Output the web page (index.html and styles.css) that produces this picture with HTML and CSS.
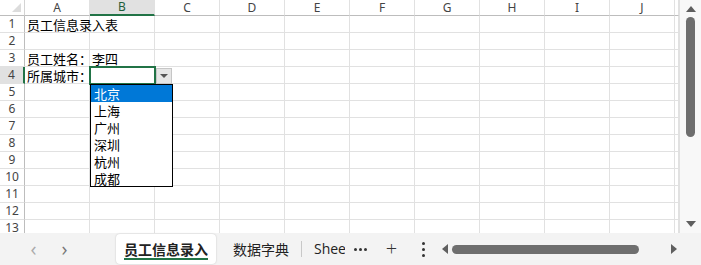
FILE: index.html
```html
<!DOCTYPE html>
<html>

<head>
    <meta charset="UTF-8">
    <title>员工信息录入</title>
    <link rel="stylesheet" href="styles.css">
</head>

<body>
    <div class="workbook">
        <div class="main">
            <div class="sheet">
                <div class="corner"><span class="tri"></span></div>
                <div class="col-head">A</div>
                <div class="col-head active">B</div>
                <div class="col-head">C</div>
                <div class="col-head">D</div>
                <div class="col-head">E</div>
                <div class="col-head">F</div>
                <div class="col-head">G</div>
                <div class="col-head">H</div>
                <div class="col-head">I</div>
                <div class="col-head">J</div>
                <div class="col-head"></div>
            </div>
            <div class="vscroll">
                <span class="arrow up"></span>
                <div class="vtrack"><div class="vthumb"></div></div>
                <span class="arrow down"></span>
            </div>
            <div class="dropdown">
                <div class="item selected">北京</div>
                <div class="item">上海</div>
                <div class="item">广州</div>
                <div class="item">深圳</div>
                <div class="item">杭州</div>
                <div class="item">成都</div>
            </div>
            <div class="drop-button"><span class="caret"></span></div>
        </div>
        <div class="tabbar">
            <span class="nav">&lsaquo;</span>
            <span class="nav">&rsaquo;</span>
            <div class="tab active">员工信息录入</div>
            <div class="tab">数据字典</div>
            <span class="sep"></span>
            <div class="tab clip">Sheet1</div>
            <span class="more"><i></i><i></i><i></i></span>
            <span class="plus">+</span>
            <span class="kebab"><i></i><i></i><i></i></span>
            <div class="hscroll">
                <span class="arrow left"></span>
                <div class="htrack"><div class="hthumb"></div></div>
                <span class="arrow right"></span>
            </div>
        </div>
    </div>
    <script>
        const sheet = document.querySelector('.sheet');
        const cells = {
            '1,0': '员工信息录入表',
            '3,0': '员工姓名：',
            '3,1': '李四',
            '4,0': '所属城市：'
        };
        for (let r = 1; r <= 13; r++) {
            const head = document.createElement('div');
            head.className = 'row-head' + (r === 4 ? ' active' : '');
            head.textContent = r;
            sheet.appendChild(head);
            for (let c = 0; c < 11; c++) {
                const cell = document.createElement('div');
                cell.className = 'cell';
                if (r === 4 && c === 1) cell.classList.add('selected');
                const text = cells[r + ',' + c];
                if (text) cell.textContent = text;
                sheet.appendChild(cell);
            }
        }
    </script>
</body>

</html>
```

FILE: styles.css
```css
body {
    margin: 0;
    width: 701px;
    height: 265px;
    overflow: hidden;
    background-color: #fff;
    font-family: "Noto Sans CJK SC", sans-serif;
}

.workbook {
    display: flex;
    flex-direction: column;
    height: 265px;
}

.main {
    position: relative;
    display: flex;
    height: 233px;
    overflow: hidden;
}

.sheet {
    display: grid;
    grid-template-columns: 25px repeat(10, 65px) 4px;
    grid-template-rows: 16px repeat(13, 17px);
    width: 679px;
    overflow: hidden;
    border-right: 1px solid #e1e1e1;
}

.corner {
    position: relative;
    border-right: 1px solid #d4d4d4;
    border-bottom: 1px solid #bdbdbd;
}

.tri {
    position: absolute;
    right: 3px;
    bottom: 3px;
    border-left: 9px solid transparent;
    border-bottom: 9px solid #dcdcdc;
}

.col-head {
    display: flex;
    align-items: center;
    justify-content: center;
    font-family: "Noto Sans", sans-serif;
    font-size: 12px;
    color: #444;
    border-right: 1px solid #e1e1e1;
    border-bottom: 1px solid #bdbdbd;
    line-height: 1;
}

.col-head.active {
    background-color: #e1e1e1;
    border-bottom: 2px solid #217346;
    color: #1e5e3a;
}

.row-head {
    display: flex;
    align-items: center;
    justify-content: center;
    font-family: "Noto Sans", sans-serif;
    font-size: 12px;
    color: #444;
    border-right: 1px solid #bdbdbd;
    border-bottom: 1px solid #e1e1e1;
    line-height: 1;
}

.row-head.active {
    background-color: #e1e1e1;
    border-right: 2px solid #217346;
}

.cell {
    border-right: 1px solid #e1e1e1;
    border-bottom: 1px solid #e1e1e1;
    font-size: 13px;
    line-height: 17px;
    color: #000;
    padding-left: 2px;
    white-space: nowrap;
}

.cell.selected {
    outline: 2px solid #217346;
    outline-offset: -1px;
    position: relative;
    z-index: 1;
}

.vscroll {
    flex: 1;
    display: flex;
    flex-direction: column;
    align-items: center;
    background-color: #f8f8f8;
    padding: 4px 0;
}

.vtrack {
    flex: 1;
    width: 9px;
    padding: 5px 0 0;
}

.vthumb {
    height: 120px;
    background-color: #6e6e6e;
    border-radius: 5px;
}

.arrow {
    width: 0;
    height: 0;
}

.arrow.up {
    border-left: 5px solid transparent;
    border-right: 5px solid transparent;
    border-bottom: 6px solid #5f5f5f;
    margin-top: 2px;
}

.arrow.down {
    border-left: 5px solid transparent;
    border-right: 5px solid transparent;
    border-top: 6px solid #5f5f5f;
    margin-bottom: 2px;
}

.arrow.left {
    border-top: 5px solid transparent;
    border-bottom: 5px solid transparent;
    border-right: 6px solid #5f5f5f;
}

.arrow.right {
    border-top: 5px solid transparent;
    border-bottom: 5px solid transparent;
    border-left: 6px solid #5f5f5f;
}

.dropdown {
    position: absolute;
    left: 90px;
    top: 84px;
    width: 81px;
    height: 101px;
    border: 1px solid #000;
    background-color: #fff;
    z-index: 2;
}

.item {
    height: 17px;
    line-height: 17px;
    font-size: 13px;
    padding-left: 3px;
    color: #000;
}

.item.selected {
    background-color: #0078d7;
    color: #fff;
}

.drop-button {
    position: absolute;
    left: 156px;
    top: 68px;
    width: 16px;
    height: 16px;
    background-color: #e6e6e6;
    border: 1px solid #c6c6c6;
    box-sizing: border-box;
    display: flex;
    align-items: center;
    justify-content: center;
    z-index: 2;
}

.caret {
    border-left: 4px solid transparent;
    border-right: 4px solid transparent;
    border-top: 4px solid #555;
}

.tabbar {
    flex: 1;
    display: flex;
    align-items: center;
    background-color: #f3f3f3;
    font-size: 14px;
    color: #222;
}

.nav {
    width: 31px;
    text-align: center;
    font-family: "Open Sans", sans-serif;
    font-size: 20px;
    color: #777;
    line-height: 1;
}

.nav:first-child {
    margin-left: 18px;
    color: #aaa;
}

.tab {
    padding: 0 10px;
    height: 30px;
    line-height: 30px;
    white-space: nowrap;
}

.tab.active {
    margin-left: 36px;
    margin-right: 7px;
    background-color: #fff;
    border-radius: 4px;
    box-shadow: 0 0 2px rgba(0, 0, 0, 0.2);
    font-weight: bold;
    position: relative;
    padding: 0 8px;
}

.tab.active::after {
    content: "";
    position: absolute;
    left: 8px;
    right: 8px;
    bottom: 4px;
    height: 2px;
    background-color: #217346;
}

.sep {
    width: 1px;
    height: 16px;
    background-color: #c8c8c8;
    margin-left: 2px;
}

.tab.clip {
    width: 31px;
    padding: 0 0 0 12px;
    overflow: hidden;
    font-family: "Open Sans", sans-serif;
}

.more {
    display: flex;
    gap: 2px;
    margin-left: 9px;
    width: 22px;
}

.more i {
    width: 3px;
    height: 3px;
    border-radius: 50%;
    background-color: #333;
}

.plus {
    font-family: "Open Sans", sans-serif;
    font-size: 20px;
    font-weight: 300;
    color: #333;
    width: 31px;
    text-align: center;
    line-height: 1;
}

.kebab {
    display: flex;
    flex-direction: column;
    align-items: center;
    gap: 3px;
    width: 22px;
    margin-left: 5px;
}

.kebab i {
    width: 3px;
    height: 3px;
    border-radius: 50%;
    background-color: #333;
}

.hscroll {
    flex: 1;
    display: flex;
    align-items: center;
    padding: 0 24px 0 8px;
    gap: 4px;
}

.htrack {
    flex: 1;
    padding-right: 28px;
}

.hthumb {
    height: 9px;
    background-color: #6e6e6e;
    border-radius: 5px;
}
```
